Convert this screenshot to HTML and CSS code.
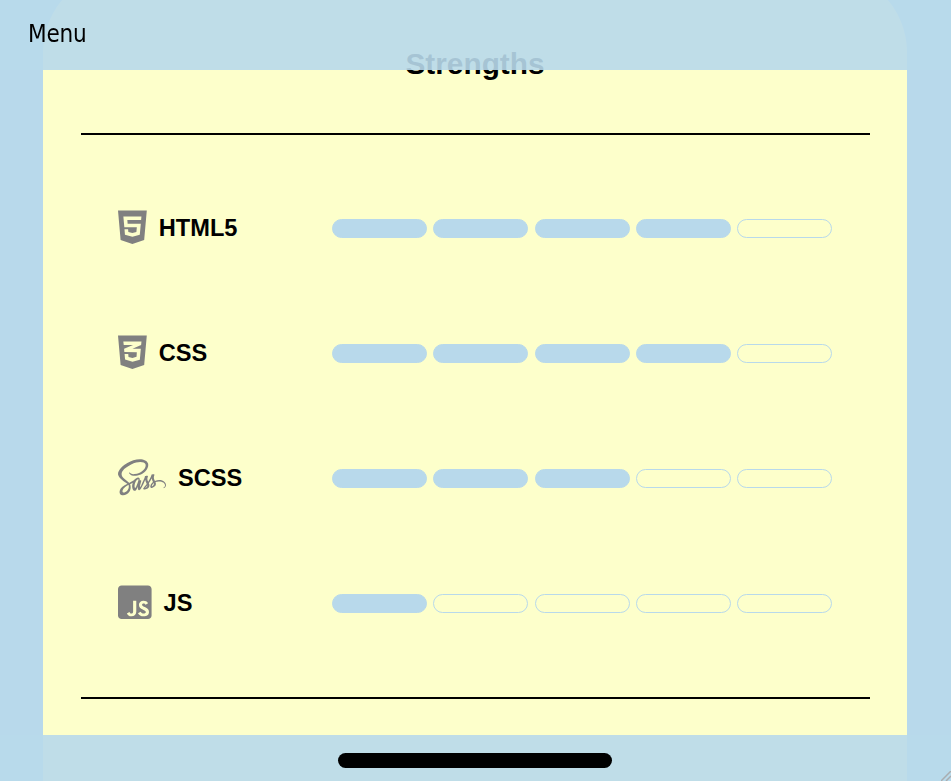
FILE: index.html
```html
<!DOCTYPE html>
<html lang="en">
<head>
<meta charset="utf-8">
<title>Strengths</title>
<link rel="stylesheet" href="styles.css">
</head>
<body>
<header class="topbar"><span class="menu">Menu</span></header>
<main class="card">
  <h2 class="title">Strengths</h2>
  <section class="skills">
    <div class="skill">
      <div class="label">
        <svg class="icon" viewBox="0 0 384 512" width="28.8" height="38.4"><path d="M0 32l34.9 395.8L191.5 480l157.6-52.2L384 32H0zm308.2 127.9H124.4l4.1 49.4h175.6l-13.6 148.4-97.9 27v.3h-1.1l-98.7-27.3-6-75.8h47.7L138 320l53.5 14.5 53.7-14.5 6-62.2H84.3L71.5 112.2h241.1l-4.4 47.7z"/></svg>
        <span>HTML5</span>
      </div>
      <div class="meter"><i class="on"></i><i class="on"></i><i class="on"></i><i class="on"></i><i></i></div>
    </div>
    <div class="skill">
      <div class="label">
        <svg class="icon" viewBox="0 0 384 512" width="28.8" height="38.4"><path d="M0 32l34.9 395.8L192 480l157.1-52.2L384 32H0zm313.1 80l-4.8 47.3L193 208.6l-.3.1h111.5l-12.8 146.6-98.2 28.7-98.8-29.2-6.4-73.9h48.9l3.2 38.3 52.6 13.3 54.7-15.4 3.7-61.6-166.3-.5v-.1l-.2.1-3.6-46.3L193.1 162l6.5-2.7H76.7L70.9 112h242.2z"/></svg>
        <span>CSS</span>
      </div>
      <div class="meter"><i class="on"></i><i class="on"></i><i class="on"></i><i class="on"></i><i></i></div>
    </div>
    <div class="skill">
      <div class="label">
        <svg class="icon" viewBox="0 0 640 512" width="48" height="38.4"><path d="M550.97 291.92a131.16 131.16 0 0 0-58 13.5c-5.9-11.9-12-22.3-13-30.1-1.2-9.1-2.5-14.5-1.1-25.3s7.7-26.1 7.6-27.2-1.4-6.6-14.3-6.7-24 2.5-25.29 5.9a122.83 122.83 0 0 0-5.3 19.1c-2.3 11.7-25.79 53.5-39.09 75.3-4.4-8.5-8.1-16-8.9-22-1.2-9.1-2.5-14.5-1.1-25.3s7.7-26.1 7.6-27.2-1.4-6.6-14.29-6.7-24 2.5-25.3 5.9-2.7 11.4-5.3 19.1-33.89 77.3-42.08 95.4c-4.2 9.2-7.8 16.6-10.4 21.6-.4.8-.7 1.3-.9 1.7.3-.5.5-1 .5-.8-2.2 4.3-3.5 6.7-3.5 6.7v.1c-1.7 3.2-3.6 6.1-4.5 6.1-.6 0-1.9-8.4.3-19.9 4.7-24.2 15.8-61.8 15.7-63.1-.1-.7 2.1-7.2-7.3-10.7-9.1-3.3-12.4 2.2-13.2 2.2s-1.4 2-1.4 2 10.1-42.4-19.39-42.4c-18.4 0-44 20.2-56.58 38.5-7.9 4.3-25 13.6-43 23.5-6.9 3.8-14 7.7-20.7 11.4-.5-.5-.9-1-1.4-1.5-35.79-38.2-101.87-65.2-99.07-116.5 1-18.7 7.5-67.8 127.07-127.4 98-48.8 176.35-35.4 189.84-5.6 19.4 42.5-41.89 121.6-143.66 133-38.79 4.3-59.18-10.7-64.28-16.3-5.3-5.9-6.1-6.2-8.1-5.1-3.3 1.8-1.2 7 0 10.1 3 7.9 15.5 21.9 36.79 28.9 18.7 6.1 64.18 9.5 119.17-11.8 61.78-23.8 109.87-90.1 95.77-145.6C386.52 18.32 293 .18 204.57 31.62c-52.69 18.7-109.67 48.1-150.66 86.4-48.69 45.6-56.48 85.3-53.28 101.9 11.39 58.9 92.57 97.3 125.06 125.7-1.6.9-3.1 1.7-4.5 2.5-16.29 8.1-78.18 40.5-93.67 74.7-17.5 38.8 2.9 66.6 16.29 70.4 41.79 11.6 84.58-9.3 107.57-43.6s20.2-79.1 9.6-99.5c-.1-.3-.3-.5-.4-.8 4.2-2.5 8.5-5 12.8-7.5 8.29-4.9 16.39-9.4 23.49-13.3-4 10.8-6.9 23.8-8.4 42.6-1.8 22 7.3 50.5 19.1 61.7 5.2 4.9 11.49 5 15.39 5 13.8 0 20-11.4 26.89-25 8.5-16.6 16-35.9 16-35.9s-9.4 52.2 16.3 52.2c9.39 0 18.79-12.1 23-18.3v.1s.2-.4.7-1.2c1-1.5 1.5-2.4 1.5-2.4v-.3c3.8-6.5 12.1-21.4 24.59-46 16.2-31.8 31.69-71.5 31.69-71.5a201.24 201.24 0 0 0 6.2 25.8c2.8 9.5 8.7 19.9 13.4 30-3.8 5.2-6.1 8.2-6.1 8.2a.31.31 0 0 0 .1.2c-3 4-6.4 8.3-9.9 12.5-12.79 15.2-28 32.6-30 37.6-2.4 5.9-1.8 10.3 2.8 13.7 3.4 2.6 9.4 3 15.69 2.5 11.5-.8 19.6-3.6 23.5-5.4a82.2 82.2 0 0 0 20.19-10.6c12.5-9.2 20.1-22.4 19.4-39.8-.4-9.6-3.5-19.2-7.3-28.2 1.1-1.6 2.3-3.3 3.4-5C434.8 301.72 450.1 270 450.1 270a201.24 201.24 0 0 0 6.2 25.8c2.4 8.1 7.09 17 11.39 25.7-18.59 15.1-30.09 32.6-34.09 44.1-7.4 21.3-1.6 30.9 9.3 33.1 4.9 1 11.9-1.3 17.1-3.5a79.46 79.46 0 0 0 21.59-11.1c12.5-9.2 24.59-22.1 23.79-39.6-.3-7.9-2.5-15.8-5.4-23.4 15.7-6.6 36.09-10.2 62.09-7.2 55.68 6.5 66.58 41.3 64.48 55.8s-13.8 22.6-17.7 25-5.1 3.3-4.8 5.1c.5 2.6 2.3 2.5 5.6 1.9 4.6-.8 29.19-11.8 30.29-38.7 1.6-34-31.09-71.4-89-71.1zm-429.18 144.7c-18.39 20.1-44.19 27.7-55.28 21.3C54.61 451 59.31 421.42 82 400c13.8-13 31.59-25 43.39-32.4 2.7-1.6 6.6-4 11.4-6.9.8-.5 1.2-.7 1.2-.7.9-.6 1.9-1.1 2.9-1.7 8.29 30.4.3 57.2-19.1 78.3zm134.36-91.4c-6.4 15.7-19.89 55.7-28.09 53.6-7-1.8-11.3-32.3-1.4-62.3 5-15.1 15.6-33.1 21.9-40.1 10.09-11.3 21.19-14.9 23.79-10.4 3.5 5.9-12.2 49.4-16.2 59.2zm111 53c-2.7 1.4-5.2 2.3-6.4 1.6-.9-.5 1.1-2.4 1.1-2.4s13.9-14.9 19.4-21.7c3.2-4 6.9-8.7 10.9-13.9 0 .5.1 1 .1 1.6-.13 17.9-17.32 30-25.12 34.8zm85.58-19.5c-2-1.4-1.7-6.1 5-20.7 2.6-5.7 8.59-15.3 19-24.5a36.18 36.18 0 0 1 1.9 10.8c-.1 22.5-16.2 30.9-25.89 34.4z"/></svg>
        <span>SCSS</span>
      </div>
      <div class="meter"><i class="on"></i><i class="on"></i><i class="on"></i><i></i><i></i></div>
    </div>
    <div class="skill">
      <div class="label">
        <svg class="icon" viewBox="0 0 448 512" width="33.6" height="38.4"><path d="M400 32H48C21.5 32 0 53.5 0 80v352c0 26.5 21.5 48 48 48h352c26.5 0 48-21.5 48-48V80c0-26.5-21.5-48-48-48zM243.8 381.4c0 43.6-25.6 63.5-62.9 63.5-33.7 0-53.2-17.4-63.2-38.5l34.3-20.7c6.6 11.7 12.6 21.6 27.1 21.6 13.8 0 22.6-5.4 22.6-26.5V237.7h42.1v143.7zm99.6 63.5c-39.1 0-64.4-18.6-76.7-43l34.3-19.8c9 14.7 20.8 25.6 41.5 25.6 17.4 0 28.6-8.7 28.6-20.8 0-14.4-11.4-19.5-30.7-28l-10.5-4.5c-30.4-12.9-50.5-29.2-50.5-63.5 0-31.6 24.1-55.6 61.6-55.6 26.8 0 46 9.3 59.8 33.7L368 290c-7.2-12.9-15-18-27.1-18-12.3 0-20.1 7.8-20.1 18 0 12.6 7.8 17.7 25.9 25.6l10.5 4.5c35.8 15.3 55.9 31 55.9 66.2 0 37.8-29.8 58.6-69.7 58.6z"/></svg>
        <span>JS</span>
      </div>
      <div class="meter"><i class="on"></i><i></i><i></i><i></i><i></i></div>
    </div>
  </section>
</main>
<footer class="bottombar"><div class="home"></div></footer>
<svg class="grip" viewBox="0 0 10 10" width="10" height="10"><path d="M0 10L10 0M5 10l5-5"/></svg>
</body>
</html>
```
FILE: styles.css
```css
* { box-sizing: border-box; }
body {
  margin: 0;
  height: 781px;
  overflow: hidden;
  background: #b8d9eb;
  color: #000;
  font-family: "Liberation Sans", Arial, sans-serif;
}
.topbar, .bottombar {
  position: fixed;
  left: 0;
  right: 0;
  z-index: 1;
  display: flex;
  background: rgba(184, 217, 235, .9);
}
.topbar {
  top: 0;
  height: 70px;
  padding: 20px 28px;
}
.menu {
  font: 24px/28px "DejaVu Sans Condensed", "DejaVu Sans", sans-serif;
  font-stretch: condensed;
  letter-spacing: -.2px;
}
.bottombar {
  bottom: 0;
  height: 46px;
  padding-top: 18px;
  justify-content: center;
}
.home {
  width: 274px;
  height: 15px;
  margin-right: 1px;
  border-radius: 8px;
  background: #000;
}
.card {
  width: 864px;
  height: 809px;
  margin: -28px 0 0 43px;
  padding: 74px 37px 0 38px;
  border-radius: 80px 80px 0 0;
  background: #fdffcb;
}
.title {
  margin: 0 0 52px;
  padding-right: 1px;
  font-size: 29.8px;
  line-height: 35px;
  text-align: center;
}
.skills {
  height: 566px;
  padding: 30px 38px 30px 37px;
  border: solid #000;
  border-width: 2px 0;
}
.skill {
  display: flex;
  align-items: center;
  justify-content: space-between;
  height: 125px;
}
.label {
  display: flex;
  align-items: center;
  gap: 12px;
  font-size: 23.6px;
  font-weight: bold;
}
.label span { padding-top: 2px; }
.icon {
  display: block;
  margin-bottom: 1px;
  fill: #808080;
}
.meter {
  display: flex;
  justify-content: space-between;
  width: 500px;
  padding-top: 2px;
}
.meter i {
  width: 95px;
  height: 19px;
  border: 1px solid #b8d9eb;
  border-radius: 10px;
}
.meter .on { background: #b8d9eb; }
.grip {
  position: fixed;
  right: 0;
  bottom: 0;
  z-index: 2;
  fill: none;
  stroke: #a9adb0;
  stroke-width: 1.5;
}
```
